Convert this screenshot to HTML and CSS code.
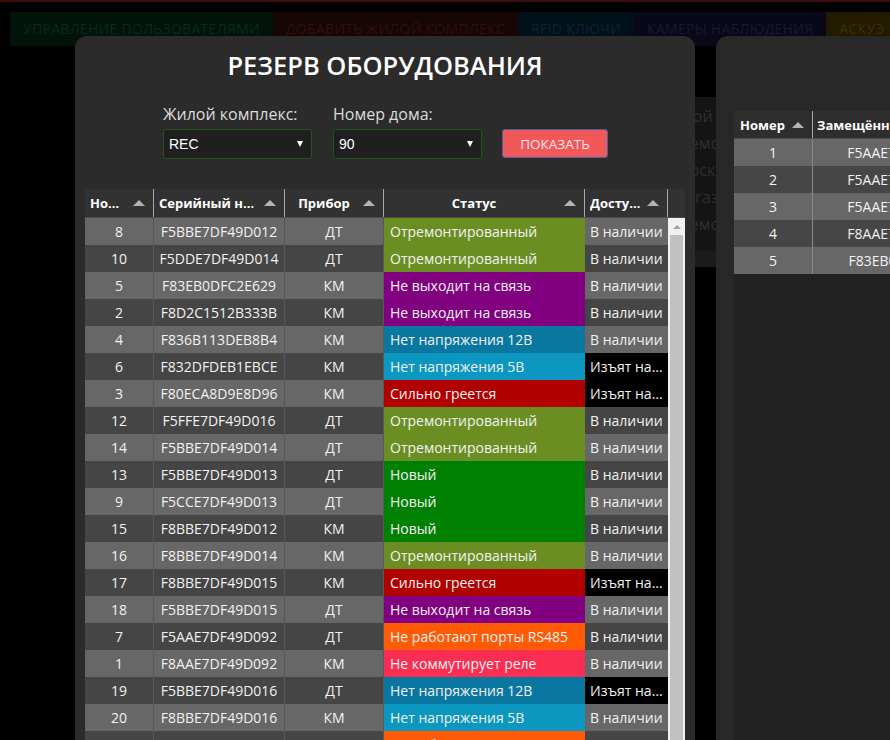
FILE: index.html
```html
<!DOCTYPE html>
<html lang="ru">
<head>
<meta charset="utf-8">
<title>Резерв оборудования</title>
<link rel="stylesheet" href="styles.css">
</head>
<body>
<div class="topline"></div>
<nav class="tabs">
  <a class="tab tab-users">Управление пользователями</a>
  <a class="tab tab-complex">Добавить жилой комплекс</a>
  <a class="tab tab-rfid">RFID ключи</a>
  <a class="tab tab-cams">Камеры наблюдения</a>
  <a class="tab tab-askue">АСКУЭ</a>
</nav>
<main class="page">
  <div class="bg-table">
    <div class="bg-row">Жилой комплекс</div>
    <div class="bg-row">Отремонтирован</div>
    <div class="bg-row">г. Москва, д. 5</div>
    <div class="bg-row">В магазине</div>
    <div class="bg-row">Отремонтирован</div>
    <div class="bg-foot"></div>
  </div>
</main>

<section class="modal modal-main">
  <h2 class="title">РЕЗЕРВ ОБОРУДОВАНИЯ</h2>
  <div class="filters">
    <div class="field">
      <label class="field-label">Жилой комплекс:</label>
      <div class="select"><span>REC</span><i class="caret"></i></div>
    </div>
    <div class="field">
      <label class="field-label">Номер дома:</label>
      <div class="select"><span>90</span><i class="caret"></i></div>
    </div>
    <button class="btn-show">ПОКАЗАТЬ</button>
  </div>

  <div class="grid">
    <div class="thead">
      <div class="th"><span class="th-label">Номер</span><i class="sort"></i></div>
      <div class="th"><span class="th-label">Серийный номер</span><i class="sort"></i></div>
      <div class="th"><span class="th-label">Прибор</span><i class="sort"></i></div>
      <div class="th"><span class="th-label">Статус</span><i class="sort"></i></div>
      <div class="th th-left"><span class="th-label">Доступность</span><i class="sort"></i></div>
      <div class="th-fill"></div>
    </div>
    <div class="tbody">
      <div class="rows">
        <div class="row"><div class="c">8</div><div class="c">F5BBE7DF49D012</div><div class="c">ДТ</div><div class="c st s-rep">Отремонтированный</div><div class="c av">В наличии</div></div>
        <div class="row"><div class="c">10</div><div class="c">F5DDE7DF49D014</div><div class="c">ДТ</div><div class="c st s-rep">Отремонтированный</div><div class="c av">В наличии</div></div>
        <div class="row"><div class="c">5</div><div class="c">F83EB0DFC2E629</div><div class="c">КМ</div><div class="c st s-off">Не выходит на связь</div><div class="c av">В наличии</div></div>
        <div class="row"><div class="c">2</div><div class="c">F8D2C1512B333B</div><div class="c">КМ</div><div class="c st s-off">Не выходит на связь</div><div class="c av">В наличии</div></div>
        <div class="row"><div class="c">4</div><div class="c">F836B113DEB8B4</div><div class="c">КМ</div><div class="c st s-12">Нет напряжения 12В</div><div class="c av">В наличии</div></div>
        <div class="row"><div class="c">6</div><div class="c">F832DFDEB1EBCE</div><div class="c">КМ</div><div class="c st s-5">Нет напряжения 5В</div><div class="c av av-out">Изъят на проверку</div></div>
        <div class="row"><div class="c">3</div><div class="c">F80ECA8D9E8D96</div><div class="c">КМ</div><div class="c st s-hot">Сильно греется</div><div class="c av av-out">Изъят на проверку</div></div>
        <div class="row"><div class="c">12</div><div class="c">F5FFE7DF49D016</div><div class="c">ДТ</div><div class="c st s-rep">Отремонтированный</div><div class="c av">В наличии</div></div>
        <div class="row"><div class="c">14</div><div class="c">F5BBE7DF49D014</div><div class="c">ДТ</div><div class="c st s-rep">Отремонтированный</div><div class="c av">В наличии</div></div>
        <div class="row"><div class="c">13</div><div class="c">F5BBE7DF49D013</div><div class="c">ДТ</div><div class="c st s-new">Новый</div><div class="c av">В наличии</div></div>
        <div class="row"><div class="c">9</div><div class="c">F5CCE7DF49D013</div><div class="c">ДТ</div><div class="c st s-new">Новый</div><div class="c av">В наличии</div></div>
        <div class="row"><div class="c">15</div><div class="c">F8BBE7DF49D012</div><div class="c">КМ</div><div class="c st s-new">Новый</div><div class="c av">В наличии</div></div>
        <div class="row"><div class="c">16</div><div class="c">F8BBE7DF49D014</div><div class="c">КМ</div><div class="c st s-rep">Отремонтированный</div><div class="c av">В наличии</div></div>
        <div class="row"><div class="c">17</div><div class="c">F8BBE7DF49D015</div><div class="c">КМ</div><div class="c st s-hot">Сильно греется</div><div class="c av av-out">Изъят на проверку</div></div>
        <div class="row"><div class="c">18</div><div class="c">F5BBE7DF49D015</div><div class="c">ДТ</div><div class="c st s-off">Не выходит на связь</div><div class="c av">В наличии</div></div>
        <div class="row"><div class="c">7</div><div class="c">F5AAE7DF49D092</div><div class="c">ДТ</div><div class="c st s-485">Не работают порты RS485</div><div class="c av">В наличии</div></div>
        <div class="row"><div class="c">1</div><div class="c">F8AAE7DF49D092</div><div class="c">КМ</div><div class="c st s-relay">Не коммутирует реле</div><div class="c av">В наличии</div></div>
        <div class="row"><div class="c">19</div><div class="c">F5BBE7DF49D016</div><div class="c">ДТ</div><div class="c st s-12">Нет напряжения 12В</div><div class="c av av-out">Изъят на проверку</div></div>
        <div class="row"><div class="c">20</div><div class="c">F8BBE7DF49D016</div><div class="c">КМ</div><div class="c st s-5">Нет напряжения 5В</div><div class="c av">В наличии</div></div>
        <div class="row"><div class="c">11</div><div class="c">F8CCE7DF49D013</div><div class="c">КМ</div><div class="c st s-485">Не работают порты RS485</div><div class="c av">В наличии</div></div>
      </div>
      <div class="scrollbar">
        <div class="sb-up"><i class="sb-arrow"></i></div>
        <div class="sb-thumb"></div>
      </div>
    </div>
  </div>
</section>

<section class="modal modal-side">
  <div class="side-table">
    <div class="side-head">
      <div class="th"><span class="th-label">Номер</span><i class="sort"></i></div>
      <div class="th th-left"><span class="th-label">Замещённое оборудование</span><i class="sort"></i></div>
    </div>
    <div class="side-row"><div class="c">1</div><div class="c">F5AAE7DF49D092</div></div>
    <div class="side-row"><div class="c">2</div><div class="c">F5AAE7DF49D093</div></div>
    <div class="side-row"><div class="c">3</div><div class="c">F5AAE7DF49D094</div></div>
    <div class="side-row"><div class="c">4</div><div class="c">F8AAE7DF49D092</div></div>
    <div class="side-row"><div class="c">5</div><div class="c">F83EB0DFC2E629</div></div>
  </div>
</section>
</body>
</html>
```

FILE: styles.css
```css
* { box-sizing: border-box; }

html, body { margin: 0; }

body {
  position: relative;
  width: 890px;
  height: 740px;
  overflow: hidden;
  background: #000;
  font-family: "Open Sans", "DejaVu Sans", sans-serif;
}

.topline { height: 2px; background: #3a0e0e; }

/* dimmed navigation behind the overlay */
.tabs { display: flex; margin: 10px 0 0 10px; }
.tab {
  height: 34px;
  line-height: 34px;
  padding: 0 13px;
  font-size: 14px;
  letter-spacing: 0.3px;
  text-transform: uppercase;
  white-space: nowrap;
}
.tab-users   { background: #02130a; color: #0a2b15; }
.tab-complex { background: #180505; color: #2f0f0f; }
.tab-rfid    { background: #02101a; color: #0a2434; }
.tab-cams    { background: #08081a; color: #18182e; }
.tab-askue   { background: #231b00; color: #3d2f00; }

/* dimmed page content behind the overlay */
.page { padding: 51px 0 0 100px; }
.bg-table { width: 700px; background: #141414; padding: 6px 0 0 560px; }
.bg-row {
  height: 27px;
  line-height: 27px;
  font-size: 16px;
  color: #2f2f2f;
  white-space: nowrap;
  overflow: hidden;
}
.bg-foot { height: 16px; margin-top: 13px; margin-left: -560px; background: #1b1b1b; }

/* modals */
.modal {
  position: absolute;
  top: 36px;
  height: 760px;
  border-radius: 12px;
  overflow: hidden;
}
.modal-main { left: 75px; width: 620px; background: #2b2b2b; padding: 12px 10px 0; }
.modal-side { left: 716px; width: 420px; background: #282828; padding: 75px 0 0 18px; }

.title {
  margin: 0;
  font-size: 25.5px;
  line-height: 34px;
  font-weight: 600;
  color: #fff;
  text-align: center;
}

.filters { display: flex; align-items: flex-end; margin: 21px 0 0 78px; }
.field { width: 149px; margin-right: 21px; }
.field-label {
  display: block;
  font-size: 16px;
  line-height: 22px;
  color: #dcdcdc;
  margin-bottom: 4px;
  white-space: nowrap;
}
.select {
  height: 30px;
  display: flex;
  align-items: center;
  justify-content: space-between;
  padding: 0 8px 0 5px;
  background: #1f1f1f;
  border: 1px solid #23521f;
  border-radius: 3px;
  font-family: "Liberation Sans", Arial, sans-serif;
  font-size: 14px;
  color: #fff;
}
.caret {
  width: 0; height: 0;
  border-left: 3.5px solid transparent;
  border-right: 3.5px solid transparent;
  border-top: 6px solid #fff;
}
.btn-show {
  width: 106px;
  height: 29px;
  margin: 0 0 1px -1px;
  padding: 0;
  background: #f0585a;
  border: 1px solid #4b5fa3;
  border-radius: 3px;
  color: #ffe6e6;
  font-family: "Open Sans", sans-serif;
  font-size: 13.5px;
}

/* equipment grid */
.grid { width: 600px; margin-top: 30px; }

.thead {
  display: grid;
  grid-template-columns: 69px 131px 99px 201px 83px 17px;
  height: 29px;
  background: #323232;
  border-bottom: 1px solid #4c4c4c;
}
.th {
  display: flex;
  align-items: center;
  min-width: 0;
  padding: 0 8px 0 5px;
  border-right: 1px solid #a8a8a8;
  font-size: 13px;
  font-weight: 700;
  color: #fff;
}
.th-label {
  flex: 1;
  min-width: 0;
  text-align: center;
  overflow: hidden;
  text-overflow: ellipsis;
  white-space: nowrap;
}
.th-left .th-label { text-align: left; }
.sort {
  flex: none;
  width: 0; height: 0;
  margin-left: 5px;
  border-left: 6px solid transparent;
  border-right: 6px solid transparent;
  border-bottom: 6px solid #b4b4b4;
}

.tbody { display: flex; }
.rows { width: 583px; }
.row {
  display: grid;
  grid-template-columns: 69px 131px 99px 201px 83px;
  height: 27px;
  background: #454545;
}
.row:nth-child(odd) { background: #676767; }
.c {
  min-width: 0;
  line-height: 27px;
  font-size: 14px;
  color: #f2f2f2;
  text-align: center;
  white-space: nowrap;
  overflow: hidden;
  text-overflow: ellipsis;
  border-right: 1px solid #575757;
}
.st { text-align: left; padding-left: 6px; border-right: 0; }
.av { text-align: left; padding: 0 3px 0 5px; border-right: 0; }
.av-out { background: #000; }

.s-rep   { background: #6b8e23; }
.s-off   { background: #800080; }
.s-12    { background: #0a77a1; }
.s-5     { background: #0b97bf; }
.s-hot   { background: #b00000; }
.s-new   { background: #008000; }
.s-485   { background: #ff5a05; }
.s-relay { background: #fa2d52; }

.scrollbar {
  width: 17px;
  display: flex;
  flex-direction: column;
  background: #f1f1f1;
}
.sb-up { height: 17px; display: flex; align-items: center; justify-content: center; }
.sb-arrow {
  width: 0; height: 0;
  border-left: 4px solid transparent;
  border-right: 4px solid transparent;
  border-bottom: 4px solid #a3a3a3;
}
.sb-thumb { flex: 1; margin: 0 2px; background: #c1c1c1; }

/* replaced equipment table */
.side-table { width: 402px; height: 700px; background: #212121; }
.side-head {
  display: grid;
  grid-template-columns: 79px 200px;
  height: 28px;
  background: #2e2e2e;
  border-bottom: 1px solid #4c4c4c;
}
.side-head .th { padding-left: 4px; }
.side-row {
  display: grid;
  grid-template-columns: 79px 186px;
  height: 27px;
  background: #464646;
}
.side-row:nth-child(even) { background: #676767; }
.side-row .c { border-right: 1px solid #8a8a8a; }
```
